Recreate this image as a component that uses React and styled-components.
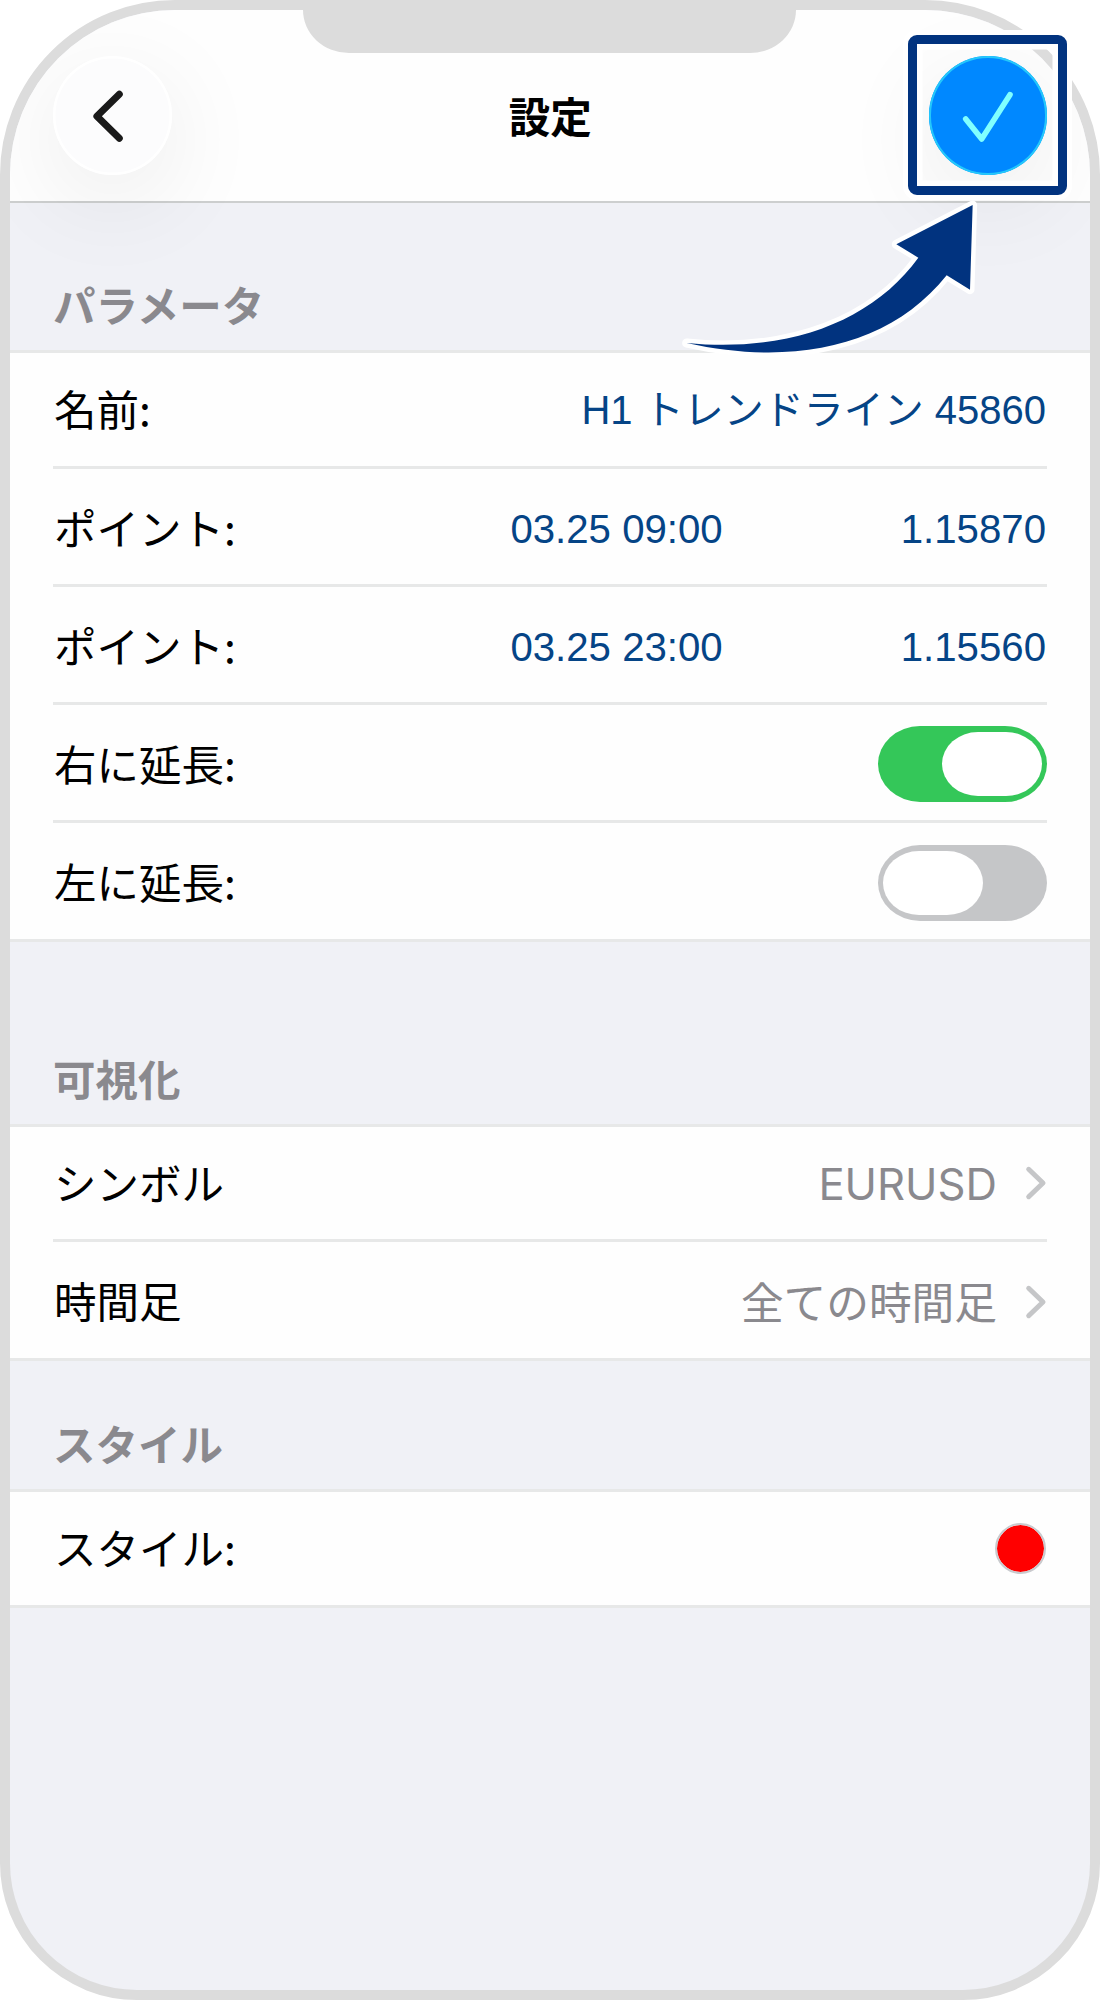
import React from 'react';
import styled, { createGlobalStyle } from 'styled-components';

const COLORS = {
    frame: '#dcdcdc',
    screen: '#f0f1f6',
    white: '#fefefe',
    line: '#e7e8e8',
    headerLine: '#cdcfcf',
    gray: '#8a898e',
    chevron: '#c5c6c8',
    value: '#054486',
    green: '#34c759',
    blue: '#0088ff',
    navy: '#01337f',
};

const PARAMETERS = [
    { label: '名前:', name: 'H1 トレンドライン 45860', height: 116 },
    { label: 'ポイント:', date: '03.25 09:00', price: '1.15870', height: 118 },
    { label: 'ポイント:', date: '03.25 23:00', price: '1.15560', height: 118 },
    { label: '右に延長:', toggle: true, on: true, height: 118 },
    { label: '左に延長:', toggle: true, on: false, height: 116 },
];

const App = () => {
    return (
        <Stage>
            <GlobalStyle />
            <Phone>
                <Notch />
                <Header>
                    <BackButton aria-label="戻る">
                        <svg width="119" height="119" viewBox="0 0 119 119" fill="none">
                            <path d="M66.3 38.3 L43.9 60.3 L66.3 82.3" stroke="#1a1a1a" strokeWidth="7" strokeLinecap="round" strokeLinejoin="round" />
                        </svg>
                    </BackButton>
                    <Title>設定</Title>
                    <ConfirmButton aria-label="完了">
                        <svg width="119" height="119" viewBox="0 0 119 119" fill="none">
                            <path d="M36.7 63 L52.7 83 L81 38.7" stroke="#80ffff" strokeWidth="5.6" strokeLinecap="round" strokeLinejoin="round" />
                        </svg>
                    </ConfirmButton>
                </Header>

                <SectionHeader $height={147}>パラメータ</SectionHeader>
                <List>
                    {PARAMETERS.map((item, index) => (
                        <Row key={index} $height={item.height}>
                            <Label>{item.label}</Label>
                            {item.name && <NameValue>{item.name}</NameValue>}
                            {item.date && <DateValue>{item.date}</DateValue>}
                            {item.price && <Value>{item.price}</Value>}
                            {item.toggle && <Toggle on={item.on} />}
                        </Row>
                    ))}
                </List>

                <SectionHeader $height={182}>可視化</SectionHeader>
                <List>
                    <Row $height={115}>
                        <Label>シンボル</Label>
                        <Symbol>EURUSD</Symbol>
                        <Chevron />
                    </Row>
                    <Row $height={116}>
                        <Label>時間足</Label>
                        <Detail>全ての時間足</Detail>
                        <Chevron />
                    </Row>
                </List>

                <SectionHeader $height={128}>スタイル</SectionHeader>
                <List>
                    <Row $height={113}>
                        <Label>スタイル:</Label>
                        <ColorDot />
                    </Row>
                </List>
            </Phone>
            <Highlight />
            <Arrow viewBox="60 600 900 480">
                <path d="M938 615 L709 733 L775 773 C640 960 390 1060 80 1029 C400 1100 690 1040 860 826 L930 869 Z" />
            </Arrow>
        </Stage>
    );
};

const Toggle = ({ on }) => (
    <Track role="switch" aria-checked={on} $on={on}>
        <Thumb />
    </Track>
);

const Chevron = () => (
    <ChevronIcon width="22" height="36" viewBox="0 0 22 36" fill="none">
        <path d="M3.7 4.3 L18 18 L3.7 31.7" stroke={COLORS.chevron} strokeWidth="5" strokeLinecap="round" strokeLinejoin="round" />
    </ChevronIcon>
);

const GlobalStyle = createGlobalStyle`
    * {
        box-sizing: border-box;
    }

    body {
        margin: 0;
        background: #ffffff;
        font-family: "Noto Sans CJK JP", sans-serif;
    }
`;

const Stage = styled.div`
    position: relative;
    width: 1100px;
    height: 2000px;
    overflow: hidden;
`;

const Phone = styled.div`
    position: relative;
    z-index: 0;
    height: 2000px;
    border: 10px solid ${COLORS.frame};
    border-radius: 175px 175px 137px 137px;
    background-color: ${COLORS.screen};
    overflow: hidden;
`;

const Notch = styled.div`
    position: absolute;
    z-index: 2;
    top: 0;
    left: 293px;
    width: 493px;
    height: 43px;
    background-color: ${COLORS.frame};
    border-radius: 0 0 46px 46px / 0 0 43px 43px;
`;

const Header = styled.header`
    position: relative;
    z-index: 1;
    display: flex;
    justify-content: space-between;
    height: 193px;
    padding: 46px 42.5px 0 43px;
    background-color: ${COLORS.white};
    border-bottom: 2px solid ${COLORS.headerLine};
`;

const RoundButton = styled.button`
    display: block;
    width: 118.5px;
    height: 118.5px;
    padding: 0;
    border: none;
    border-radius: 50%;

    svg {
        display: block;
    }
`;

const BackButton = styled(RoundButton)`
    background-color: #fcfcfd;
    box-shadow: inset 0 0 0 2.5px #ffffff, 0 24px 100px rgba(0, 6, 8, 0.08);
`;

const ConfirmButton = styled(RoundButton)`
    background-color: ${COLORS.blue};
    box-shadow: inset 0 0 0 2px #24c8fb, 0 24px 100px rgba(0, 6, 8, 0.08);
`;

const Title = styled.h1`
    margin: 0;
    font-size: 41.5px;
    font-weight: 700;
    line-height: 119px;
    color: #000000;
`;

const SectionHeader = styled.h2`
    display: flex;
    align-items: flex-end;
    height: ${p => p.$height}px;
    margin: 0;
    padding: 0 43px 21px;
    font-size: 42.5px;
    font-weight: 700;
    line-height: 50px;
    color: ${COLORS.gray};
`;

const List = styled.div`
    padding: 0 43px;
    background-color: ${COLORS.white};
    border-top: 3px solid ${COLORS.line};
    border-bottom: 3px solid ${COLORS.line};
`;

const Row = styled.div`
    display: flex;
    align-items: center;
    height: ${p => p.$height}px;

    &:not(:first-child) {
        padding-top: 3px;
    }

    &:not(:last-child) {
        border-bottom: 3px solid ${COLORS.line};
    }
`;

const Label = styled.span`
    flex: 1;
    padding: 0 0 3px 1px;
    font-size: 42.5px;
    line-height: 60px;
    color: #000000;
`;

const Value = styled.span`
    padding: 3px 1px 0 0;
    font-family: "Liberation Sans", "Noto Sans CJK JP", sans-serif;
    font-size: 40.2px;
    line-height: 60px;
    text-align: right;
    white-space: pre;
    color: ${COLORS.value};
`;

const NameValue = styled(Value)`
    padding-top: 0;
    font-size: 40px;
`;

const DateValue = styled(Value)`
    margin-right: 178px;
    padding: 4px 0 0;
`;

const Detail = styled.span`
    padding-bottom: 4px;
    font-size: 42.7px;
    line-height: 60px;
    color: ${COLORS.gray};
`;

const Symbol = styled(Detail)`
    padding: 3px 0 0;
    font-family: Inter, sans-serif;
    font-size: 43.6px;
`;

const ChevronIcon = styled.svg`
    margin-left: 28px;
`;

const Track = styled.div`
    display: flex;
    align-items: center;
    justify-content: ${p => (p.$on ? 'flex-end' : 'flex-start')};
    width: 169px;
    height: 76px;
    padding: 0 5px;
    border-radius: 42px / 38px;
    background-color: ${p => (p.$on ? COLORS.green : '#c5c6c8')};
`;

const Thumb = styled.div`
    width: 100px;
    height: 64px;
    border-radius: 36px / 32px;
    background-color: #ffffff;
`;

const ColorDot = styled.div`
    width: 51px;
    height: 51px;
    margin-right: 1px;
    border: 2.5px solid #c9cace;
    border-radius: 50%;
    background-color: #ff0000;
    background-clip: padding-box;
`;

const Highlight = styled.div`
    position: absolute;
    top: 35px;
    left: 907.5px;
    width: 159px;
    height: 159.5px;
    border: 9px solid ${COLORS.navy};
    border-radius: 9px;
    box-shadow: 0 0 0 5px #ffffff, inset 0 0 0 5.5px #ffffff;
`;

const Arrow = styled.svg`
    position: absolute;
    top: 200px;
    left: 680px;
    width: 300px;
    height: 160px;
    overflow: visible;

    path {
        fill: ${COLORS.navy};
        stroke: #ffffff;
        stroke-width: 27;
        stroke-linejoin: round;
        paint-order: stroke;
    }
`;

export default App;
